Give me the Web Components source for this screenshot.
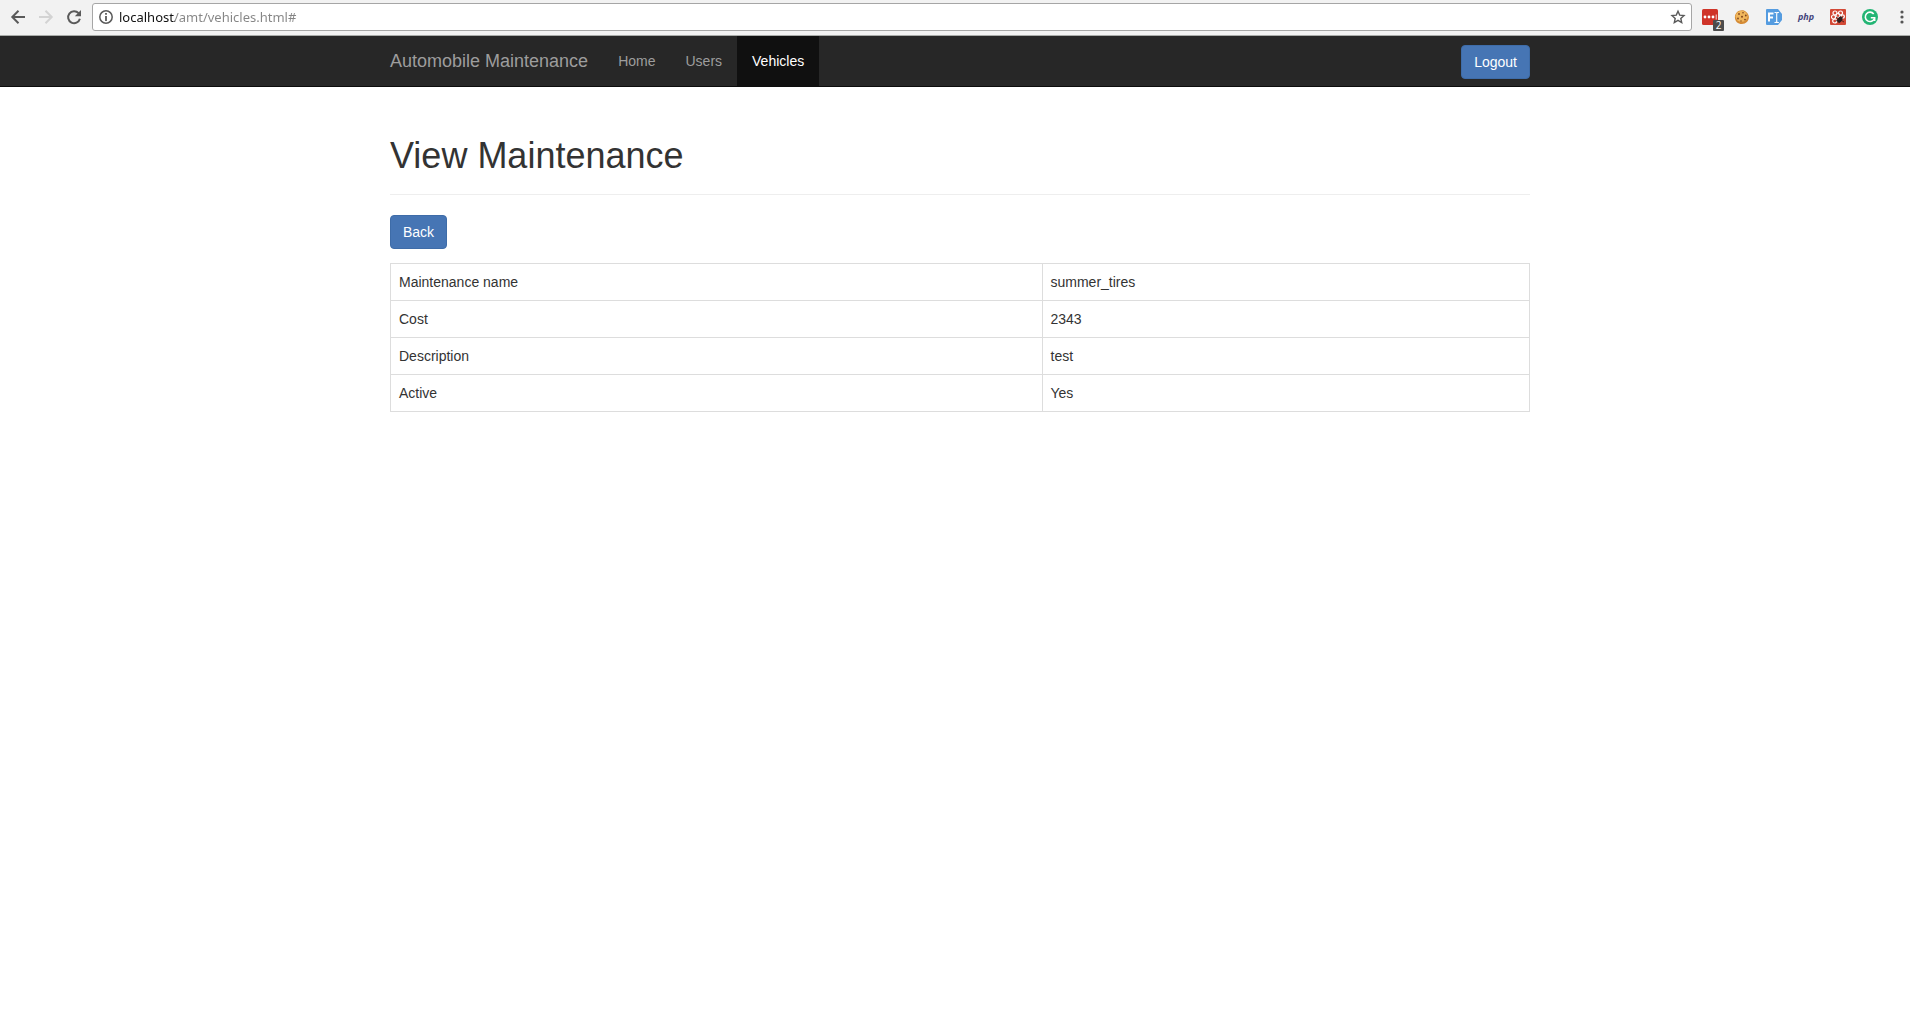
<!DOCTYPE html>
<html lang="en">
<head>
<meta charset="utf-8">
<title>Automobile Maintenance</title>
<style>
  html, body { margin: 0; background: #fff; }
  body { font: 14px/20px "Liberation Sans", Arial, sans-serif; color: #333; overflow-x: hidden; }
</style>
</head>
<body>
<browser-bar address="localhost/amt/vehicles.html#"></browser-bar>
<site-navbar brand="Automobile Maintenance">
  <nav-link href="#home">Home</nav-link>
  <nav-link href="#users">Users</nav-link>
  <nav-link href="#vehicles" active>Vehicles</nav-link>
  <primary-button slot="action">Logout</primary-button>
</site-navbar>
<page-content heading="View Maintenance">
  <primary-button>Back</primary-button>
  <detail-table></detail-table>
</page-content>

<script>
const define = (name, html, setup) => customElements.define(name, class extends HTMLElement {
  constructor() {
    super();
    const t = document.createElement('template');
    t.innerHTML = html;
    this.attachShadow({ mode: 'open' }).append(t.content.cloneNode(true));
  }
  connectedCallback() { if (setup) setup(this, this.shadowRoot); }
});

define('browser-bar', `
<style>
  :host { display: flex; box-sizing: border-box; height: 36px; padding-top: 3px; align-items: flex-start;
    background: #f2f2f2; border-bottom: 1px solid #a9aca9; }
  button { display: flex; align-items: center; justify-content: center; padding: 0; border: 0; background: none;
    height: 28px; flex: none; position: relative; }
  svg { display: block; overflow: visible; }
  .nav { display: flex; padding: 0 4px; }
  .nav button { width: 28px; }
  .box { flex: 1; display: flex; align-items: center; box-sizing: border-box; height: 28px; min-width: 0;
    border: 1px solid #a6a6a6; border-radius: 3px; background: #fff; padding-left: 6px; }
  .box button { height: 26px; }
  input { flex: 1; min-width: 0; height: 24px; margin: 0 0 0 6px; padding: 0; border: 0; outline: 0;
    font: 13px/24px "Noto Sans", "Open Sans", sans-serif; color: #808080;
    background: linear-gradient(90deg, #111 56px, #858585 56px);
    -webkit-background-clip: text; background-clip: text; -webkit-text-fill-color: transparent; }
  .star { width: 26px; }
  .ext { display: flex; padding: 0 8px 0 2px; }
  .ext button { width: 32px; }
  .menu { width: 16px; }
  .badge { position: absolute; left: 19px; top: 17px; width: 11px; height: 11px; border-radius: 1px;
    background: #4c4c4c; color: #fff; font: 10px/11px "Open Sans", sans-serif; text-align: center; }
  .php { font: italic bold 9px/12px "Open Sans", sans-serif; color: #45457c; }
</style>
<div class="nav">
  <button aria-label="Back"><svg width="14" height="14" fill="none" stroke="#5a5a5a" stroke-width="2"><path d="M14 7H1.500M7.500 .7 1.300 7l6.200 6.300"/></svg></button>
  <button aria-label="Forward"><svg width="14" height="14" fill="none" stroke="#d3d3d3" stroke-width="2"><path d="M0 7h12.500M6.500 .7 12.700 7l-6.200 6.300"/></svg></button>
  <button aria-label="Reload"><svg width="14" height="14"><path d="M11.600 3.200A6 6 0 1 0 12.900 8.800" fill="none" stroke="#5a5a5a" stroke-width="2"/><path d="M14 0v6.200H7.800z" fill="#5a5a5a"/></svg></button>
</div>
<div class="box">
  <button aria-label="Site information"><svg width="14" height="14"><circle cx="7" cy="7" r="6.200" fill="none" stroke="#5a5a5a" stroke-width="1.500"/><path d="M6.100 3.100h1.800v1.700H6.100zM6.100 6h1.800v5H6.100z" fill="#5a5a5a"/></svg></button>
  <input aria-label="Address" spellcheck="false">
  <button class="star" aria-label="Bookmark"><svg width="14" height="14" fill="none" stroke="#5a5a5a" stroke-width="1.400"><path d="M7 1.200 8.700 5.100l4.300.4-3.200 2.900.9 4.200L7 10.400l-3.700 2.200.9-4.200L1 5.500l4.300-.4z"/></svg></button>
</div>
<div class="ext">
  <button aria-label="Passwords"><svg width="16" height="16"><rect width="16" height="16" rx="1.500" fill="#cf3429"/><g fill="#fff"><circle cx="3" cy="8" r="1.400"/><circle cx="7" cy="8" r="1.400"/><circle cx="11" cy="8" r="1.400"/><path d="M13.700 5.500h1v5h-1z" opacity=".8"/></g></svg><span class="badge">2</span></button>
  <button aria-label="Cookies"><svg width="16" height="16"><path d="M8 1.200c2 0 3 .5 4.200 1.700 1.500 1.300 2.700 3 2.700 5.200 0 4-3 6.900-7 6.900s-7-2.800-7-6.800C.9 4 4 1.200 8 1.200z" fill="#d58b35"/><ellipse cx="7.600" cy="7.300" rx="6" ry="5.500" fill="#f0b65c"/><g fill="#80451e"><circle cx="5" cy="5" r=".9"/><circle cx="9" cy="3.800" r=".8"/><circle cx="11.800" cy="6.500" r=".9"/><circle cx="8" cy="7.800" r="1"/><circle cx="4" cy="9.500" r=".9"/><circle cx="11" cy="10.600" r=".9"/><circle cx="7" cy="12" r=".7"/></g></svg></button>
  <button aria-label="Form filler"><svg width="16" height="16"><path d="M1 0h11l4 5v6l-4 5H1a1 1 0 0 1-1-1V1a1 1 0 0 1 1-1z" fill="#559ce0"/><path d="M3 12.500V4.500h4.500M3 8.500h4" fill="none" stroke="#fff" stroke-width="2"/><path d="M8.500 3.500h1.500l.7.700.7-.7h1.500M10.700 4v9M8.500 13.500h1.500l.7-.7.7.7h1.500" fill="none" stroke="#fff" stroke-width="1.100"/></svg></button>
  <button aria-label="PHP"><span class="php">php</span></button>
  <button aria-label="Debugger"><svg width="16" height="16"><rect width="16" height="16" rx="1" fill="#d34936"/><g fill="none" stroke="#fff" stroke-width="1.200"><circle cx="5" cy="4" r="2"/><circle cx="10.500" cy="4" r="2"/><circle cx="3.500" cy="8" r="2"/><circle cx="12.700" cy="7.500" r="1.700"/><circle cx="4.700" cy="12" r="2"/><circle cx="8" cy="6.500" r="2"/></g><ellipse cx="9.800" cy="10.600" rx="2.300" ry="3.200" transform="rotate(35 9.800 10.600)" fill="#2e2020"/><path d="m6 8 8 5M6 12l7-4M9 14l2-7" stroke="#2e2020" stroke-width=".8"/></svg></button>
  <button aria-label="Grammar check"><svg width="16" height="16"><circle cx="8" cy="8" r="8" fill="#23b574"/><path d="M11.700 4.900A4.700 4.700 0 1 0 12.400 9.500" fill="none" stroke="#fff" stroke-width="1.600"/><path d="M8.800 8.800h3.900v3.200" fill="none" stroke="#fff" stroke-width="1.500"/></svg></button>
</div>
<button class="menu" aria-label="Menu"><svg width="4" height="14" fill="#555"><circle cx="2" cy="2" r="1.600"/><circle cx="2" cy="7" r="1.600"/><circle cx="2" cy="12" r="1.600"/></svg></button>
`, (el, root) => { root.querySelector('input').value = el.getAttribute('address'); });

define('site-navbar', `
<style>
  :host { display: block; background: #272727; border-bottom: 1px solid #0c0c0c; padding-left: 10px; }
  nav { display: flex; max-width: 1140px; height: 50px; margin: 0 auto; }
  .brand { color: #9d9d9d; font-size: 18px; line-height: 20px; padding: 15px 15px 15px 0; text-decoration: none; }
  .links { display: flex; flex: 1; }
  .action { padding-top: 9px; }
</style>
<nav><a class="brand" href="#"></a><div class="links"><slot></slot></div><div class="action"><slot name="action"></slot></div></nav>
`, (el, root) => { root.querySelector('.brand').textContent = el.getAttribute('brand'); });

define('nav-link', `
<style>
  :host { display: block; }
  a { display: block; padding: 15px; color: #9d9d9d; line-height: 20px; text-decoration: none; }
  :host([active]) a { background: #101010; color: #fff; }
</style>
<a><slot></slot></a>
`, (el, root) => { root.querySelector('a').href = el.getAttribute('href'); });

define('primary-button', `
<style>
  :host { display: inline-block; vertical-align: top; }
  button { display: block; margin: 0; padding: 6px 12px; border: 1px solid #3e6ca8; border-radius: 4px;
    background: #4675b4; color: #fff; font: inherit; line-height: 20px; cursor: pointer; }
</style>
<button type="button"><slot></slot></button>
`);

define('page-content', `
<style>
  :host { display: block; padding: 49px 0 20px 10px; }
  main { max-width: 1140px; margin: 0 auto; }
  header { margin-bottom: 20px; padding-bottom: 18px; border-bottom: 1px solid #eee; }
  h1 { margin: 0; font-size: 36px; line-height: 40px; font-weight: 500; }
</style>
<main><header><h1></h1></header><slot></slot></main>
`, (el, root) => { root.querySelector('h1').textContent = el.getAttribute('heading'); });

define('detail-table', `
<style>
  :host { display: block; margin-top: 14px; }
  table { width: 100%; border-collapse: collapse; border: 1px solid #ddd; }
  th, td { padding: 8px; border: 1px solid #ddd; text-align: left; font-weight: 400; line-height: 20px; }
  th { width: 57.2%; }
</style>
<table><tbody>
  <tr><th scope="row">Maintenance name</th><td>summer_tires</td></tr>
  <tr><th scope="row">Cost</th><td>2343</td></tr>
  <tr><th scope="row">Description</th><td>test</td></tr>
  <tr><th scope="row">Active</th><td>Yes</td></tr>
</tbody></table>
`);
</script>
</body>
</html>
